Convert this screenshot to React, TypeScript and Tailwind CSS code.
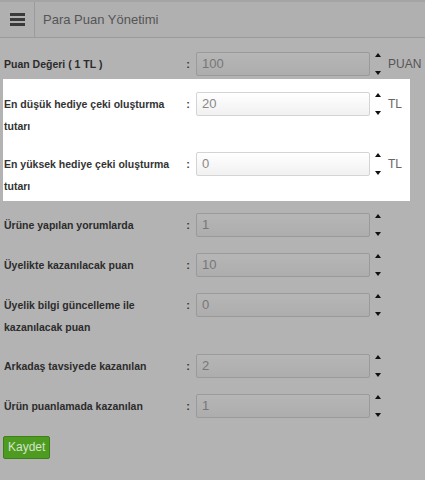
const rows = [
  { label: "Puan Değeri ( 1 TL )", value: "100", unit: "PUAN" },
];

const highlighted = [
  { label: "En düşük hediye çeki oluşturma tutarı", value: "20", unit: "TL" },
  { label: "En yüksek hediye çeki oluşturma tutarı", value: "0", unit: "TL" },
];

const rest = [
  { label: "Ürüne yapılan yorumlarda", value: "1" },
  { label: "Üyelikte kazanılacak puan", value: "10" },
  { label: "Üyelik bilgi güncelleme ile kazanılacak puan", value: "0" },
  { label: "Arkadaş tavsiyede kazanılan", value: "2" },
  { label: "Ürün puanlamada kazanılan", value: "1" },
];

type Field = { label: string; value: string; unit?: string };

function Spinner() {
  return (
    <div className="ml-[4px] flex h-[24px] w-[8px] flex-col items-center justify-between py-[1px]">
      <span className="h-0 w-0 border-x-[3.5px] border-b-[4px] border-x-transparent border-b-[#111]" />
      <span className="h-0 w-0 border-x-[3.5px] border-t-[4px] border-x-transparent border-t-[#111]" />
    </div>
  );
}

function Row({ field, lit, className }: { field: Field; lit?: boolean; className?: string }) {
  return (
    <div className={`flex items-start ${className ?? ""}`}>
      <div
        className={`mt-[1px] w-[181px] pl-[1px] pr-[10px] text-[10.5px] font-bold leading-[22px] ${
          lit ? "text-[#333]" : "text-[#2c2c2c]"
        }`}
      >
        {field.label}
      </div>
      <span
        className={`mt-[1px] w-[8px] text-center text-[11px] font-bold leading-[22px] ${
          lit ? "text-[#444]" : "text-[#333]"
        }`}
      >
        :
      </span>
      <div
        className={`ml-[4px] flex h-[24px] w-[174px] items-center rounded-[2px] border px-[5px] text-[13px] ${
          lit
            ? "border-[#d4d4d4] bg-gradient-to-b from-white to-[#f1f1f1] text-[#888]"
            : "border-[#9a9a9a] bg-gradient-to-b from-[#b6b6b6] to-[#adadad] text-[#777]"
        }`}
      >
        {field.value}
      </div>
      <Spinner />
      {field.unit && (
        <span
          className={`ml-[6px] text-[12px] leading-[24px] ${lit ? "text-[#666]" : "text-[#555]"}`}
        >
          {field.unit}
        </span>
      )}
    </div>
  );
}

export default function App() {
  return (
    <div
      className="h-[480px] w-[425px] overflow-hidden bg-[#b3b3b3]"
      style={{ fontFamily: '"Liberation Sans", Arial, sans-serif' }}
    >
      {/* HEADER */}
      <div className="flex h-[38px] border-t-2 border-b border-t-[#a4a4a4] border-b-[#9b9b9b] bg-[#b0b0b0]">
        <div className="flex w-[35px] items-center justify-center border-r border-[#9b9b9b]">
          <div className="flex w-[15px] flex-col gap-[2px]">
            <span className="h-[3px] bg-[#3a3a3a]" />
            <span className="h-[3px] bg-[#3a3a3a]" />
            <span className="h-[3px] bg-[#3a3a3a]" />
          </div>
        </div>
        <div className="flex items-center pl-[8px] text-[13px] text-[#555]">Para Puan Yönetimi</div>
      </div>

      {/* FORM */}
      <div className="px-[3px] pt-[14px]">
        {rows.map((f) => (
          <Row key={f.label} field={f} className="mb-[3px]" />
        ))}

        <div className="w-[407px] bg-white pb-[4px] pt-[13px]">
          <Row field={highlighted[0]} lit className="mb-[15px]" />
          <Row field={highlighted[1]} lit />
        </div>

        <div className="pt-[12px]">
          {rest.map((f) => (
            <Row key={f.label} field={f} className="mb-[16px]" />
          ))}
        </div>

        <button className="-mt-[2px] h-[23px] rounded-[2px] border border-[#3f7f19] bg-[#4e9b21] px-[4px] text-[12px] text-[#d4e4cc]">
          Kaydet
        </button>
      </div>

      <div className="mt-[22px] border-t border-[#a2a2a2]" />
    </div>
  );
}
